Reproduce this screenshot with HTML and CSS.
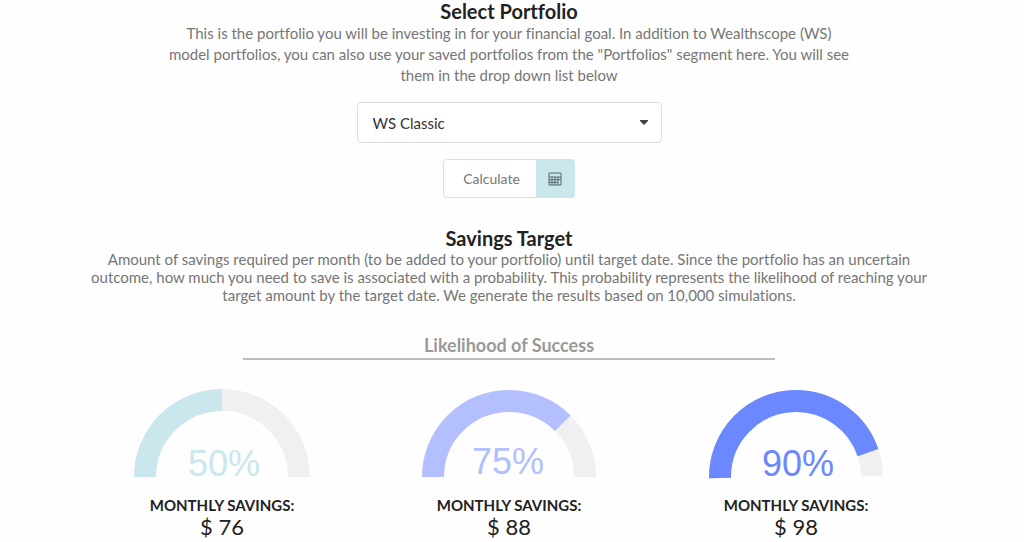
FILE: index.html
```
<!DOCTYPE html>
<html lang="en">
<head>
    <meta charset="UTF-8">
    <title>Savings Target</title>
    <link rel="stylesheet" href="styles.css">
</head>
<body>
<main class="page">
    <section class="portfolio">
        <h2><label for="portfolio">Select Portfolio</label></h2>
        <p>This is the portfolio you will be investing in for your financial goal. In addition to Wealthscope (WS) model portfolios, you can also use your saved portfolios from the "Portfolios" segment here. You will see them in the drop down list below</p>
        <div class="dropdown">
            <select id="portfolio">
                <option>WS Classic</option>
            </select>
            <svg class="caret" viewBox="0 0 8 5" aria-hidden="true"><path d="M0 0h8v1L4 5 0 1z"/></svg>
        </div>
        <button class="calculate" type="button">
            <span class="calculate-text">Calculate</span>
            <span class="calculate-icon">
                <svg viewBox="0 0 14 14" aria-hidden="true">
                    <path d="M1 1h12v12H1zM1 5h12M1 7.7h12M1 10.3h9M4 5v8M7 5v8M10 5v8"/>
                </svg>
            </span>
        </button>
    </section>

    <section class="savings">
        <h2>Savings Target</h2>
        <p>Amount of savings required per month (to be added to your portfolio) until target date. Since the portfolio has an uncertain outcome, how much you need to save is associated with a probability. This probability represents the likelihood of reaching your target amount by the target date. We generate the results based on 10,000 simulations.</p>
    </section>

    <h3 class="likelihood">Likelihood of Success</h3>

    <!-- pathLength is 100, so the dash is the percentage -->
    <section class="gauges">
        <div class="gauge gauge-low">
            <svg viewBox="0 0 176 90">
                <path class="track" d="M11 88a77 77 0 0 1 154 0"/>
                <path class="value" pathLength="100" stroke-dasharray="50 100" d="M11 88a77 77 0 0 1 154 0"/>
                <text x="90" y="87">50%</text>
            </svg>
            <h4>MONTHLY SAVINGS:</h4>
            <span class="amount">$ 76</span>
        </div>
        <div class="gauge gauge-mid">
            <svg viewBox="0 0 176 90">
                <path class="track" d="M12 88a76 76 0 0 1 152 0"/>
                <path class="value" pathLength="100" stroke-dasharray="75 100" d="M12 88a76 76 0 0 1 152 0"/>
                <text x="87" y="85">75%</text>
            </svg>
            <h4>MONTHLY SAVINGS:</h4>
            <span class="amount">$ 88</span>
        </div>
        <div class="gauge gauge-high">
            <svg viewBox="0 0 176 90">
                <path class="track" d="M12 89a76 76 0 0 1 152 -2"/>
                <path class="value" pathLength="100" stroke-dasharray="90 100" d="M12 89a76 76 0 0 1 152 -2"/>
                <text x="90" y="87">90%</text>
            </svg>
            <h4>MONTHLY SAVINGS:</h4>
            <span class="amount">$ 98</span>
        </div>
    </section>
</main>
</body>
</html>
```

FILE: styles.css
```
*{
    box-sizing: border-box;
}
body{
    margin: 0;
    background: #fefefe;
    color: #767676;
    font-family: Lato, "Liberation Sans", sans-serif;
    font-size: 15px;
    font-variant-ligatures: none;
}
.page{
    padding: 0 6px 0 0;
    text-align: center;
}
h2, h3, h4, p{
    margin: 0;
}
h2{
    margin-bottom: 1px;
    color: #222;
    font-size: 20px;
    line-height: 22px;
}

/* portfolio */
.portfolio{
    max-width: 686px;
    margin: 0 auto;
}
.portfolio p{
    line-height: 21px;
}
.dropdown{
    position: relative;
    max-width: 305px;
    margin: 16px auto;
}
.dropdown select{
    appearance: none;
    display: block;
    width: 100%;
    height: 41px;
    padding: 0 15px;
    border: 1px solid #dedede;
    border-radius: 4px;
    background: #fff;
    color: #333;
    font: inherit;
}
.caret{
    position: absolute;
    top: 18px;
    right: 14px;
    width: 8px;
    height: 5px;
    fill: #444;
    pointer-events: none;
}
.calculate{
    display: inline-flex;
    height: 39px;
    padding: 0;
    border: 0;
    border-radius: 4px;
    overflow: hidden;
    background: #fff;
    color: #767676;
    font: inherit;
    font-size: 14px;
    cursor: pointer;
    vertical-align: top;
}
.calculate-text{
    display: flex;
    align-items: center;
    padding: 0 16px 0 19px;
    border: 1px solid #dedede;
    border-right: 0;
    border-radius: 4px 0 0 4px;
}
.calculate-icon{
    display: flex;
    align-items: center;
    justify-content: center;
    width: 39px;
    background: #c9e7ed;
}
.calculate-icon svg{
    width: 14px;
    height: 14px;
    fill: none;
    stroke: #56676b;
}

/* savings target */
.savings{
    max-width: 860px;
    margin: 29px auto 0;
}
.savings p{
    line-height: 18px;
}
.likelihood{
    max-width: 532px;
    margin: 28px auto 29px;
    border-bottom: 2px solid #bdbdbd;
    color: #999;
    font-size: 18px;
    line-height: 26px;
}

/* gauges */
.gauges{
    display: grid;
    grid-template-columns: repeat(3, 1fr);
    max-width: 861px;
    margin: 0 auto;
}
.gauge svg{
    display: block;
    width: 176px;
    height: 90px;
    margin: 0 auto 15px;
    overflow: visible;
}
.gauge path{
    fill: none;
    stroke-width: 22px;
}
.gauge .track{
    stroke: #f0f0f0;
}
.gauge text{
    font-family: "Liberation Sans", Arial, sans-serif;
    font-size: 36px;
    text-anchor: middle;
}
.gauge-low .value{ stroke: #c9e7ed; }
.gauge-low text{ fill: #c9e7ed; }
.gauge-mid .value{ stroke: #b3bfff; }
.gauge-mid text{ fill: #b3bfff; }
.gauge-high .value{ stroke: #6b88ff; }
.gauge-high text{ fill: #6b88ff; }
.gauge h4{
    color: #222;
    font-size: 15px;
    line-height: 22px;
}
.amount{
    display: block;
    color: #222;
    font-size: 22px;
    line-height: 22px;
}
```
